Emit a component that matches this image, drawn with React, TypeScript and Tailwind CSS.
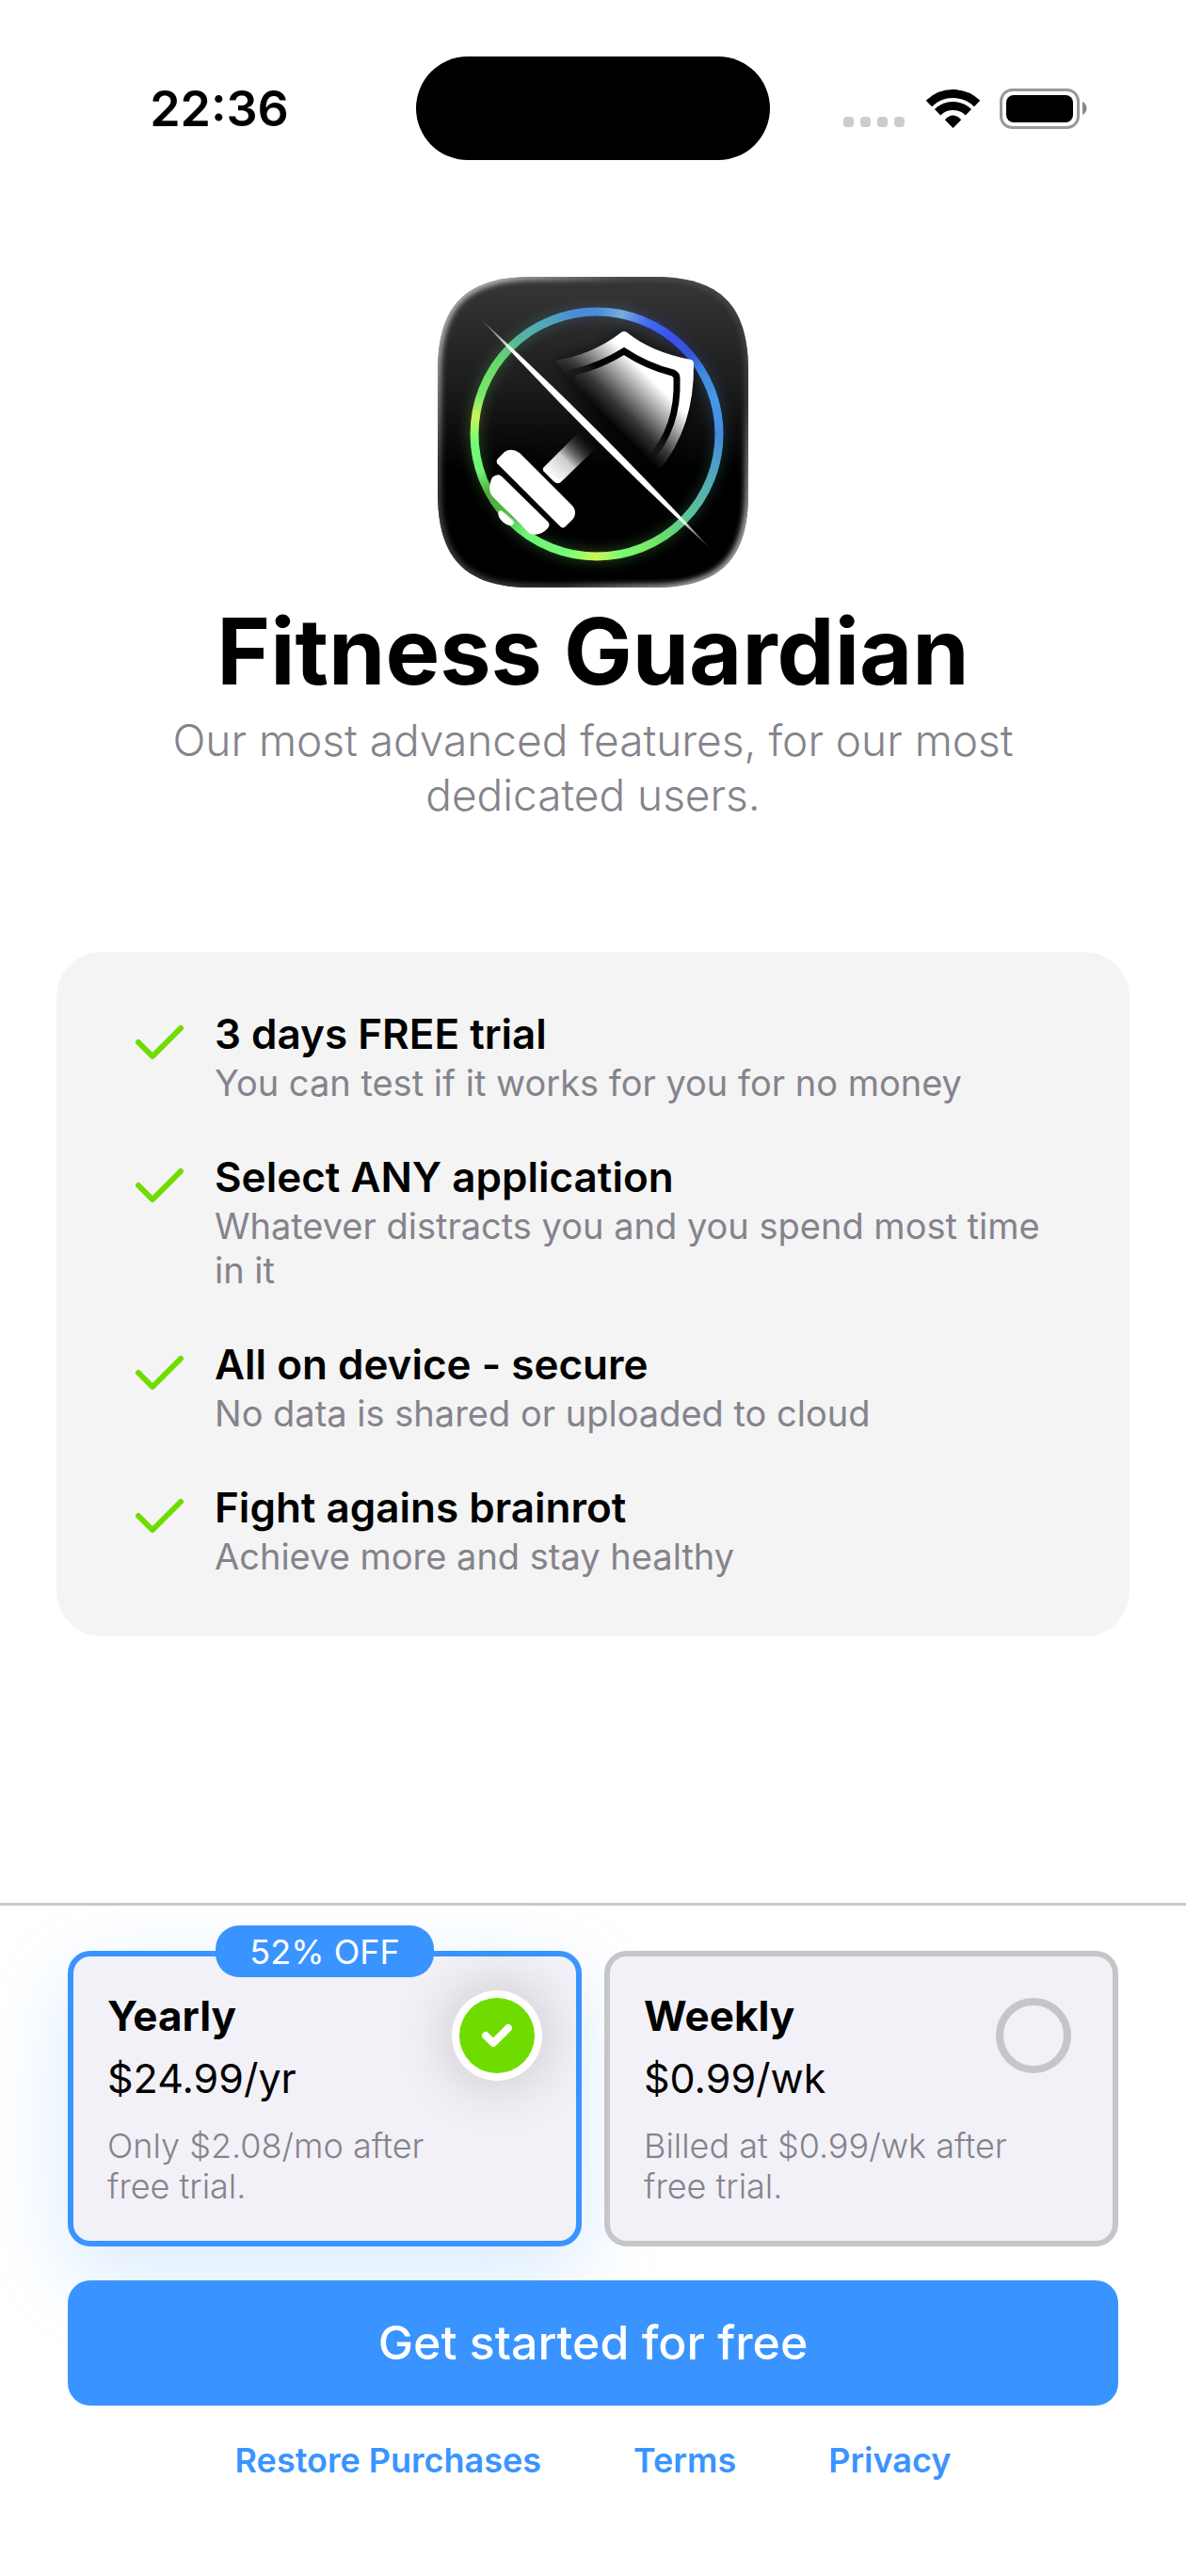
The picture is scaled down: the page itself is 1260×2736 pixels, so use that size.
const features = [
  ["3 days FREE trial", "You can test if it works for you for no money"],
  ["Select ANY application", "Whatever distracts you and you spend most time in it"],
  ["All on device - secure", "No data is shared or uploaded to cloud"],
  ["Fight agains brainrot", "Achieve more and stay healthy"],
];

function StatusBar() {
  return (
    <header className="grid h-[230px] grid-cols-3 items-start pt-[60px]">
      <div className="flex h-[112px] items-center justify-center pl-[46px] text-[52px] font-semibold">22:36</div>
      <div className="h-[110px] w-[376px] justify-self-center rounded-[55px] bg-black" />
      <div className="flex h-[110px] items-center justify-center gap-[21px] pr-[50px]">
        <svg width="68" height="42" viewBox="0 0 68 42" aria-label="No signal">
          {[0, 18, 36, 54].map((x) => (
            <rect key={x} x={x + 1} y="30" width="11" height="11" rx="4" fill="#cccccc" />
          ))}
        </svg>
        <svg width="57" height="42" viewBox="0 0 57 42" aria-label="Wi-Fi">
          <g fill="none" stroke="#000" strokeWidth="9">
            <path d="M2.900 16A36.500 36.500 0 0 1 54.100 16" />
            <path d="M12.100 25.200A23.300 23.300 0 0 1 44.900 25.200" />
          </g>
          <path d="M19.800 33.200Q28.500 24 37.200 33.200L28.500 42Z" />
        </svg>
        <svg width="94" height="43" viewBox="0 0 94 43" aria-label="Battery full">
          <rect x="1.500" y="1.500" width="82" height="40" rx="12" fill="none" stroke="#999" strokeWidth="3" />
          <rect x="7" y="7" width="71" height="29" rx="8" />
          <path d="M88 14C94 17 94 25 88 28Z" fill="#888" />
        </svg>
      </div>
    </header>
  );
}

function AppIcon() {
  return (
    <svg className="h-[330px] w-[330px]" viewBox="0 0 330 330" role="img" aria-label="Fitness Guardian app icon">
      <defs>
        <linearGradient id="bg" x1="0" y1="0" x2="0" y2="1">
          <stop offset="0.05" stopColor="#333" />
          <stop offset="0.35" stopColor="#1c1c1c" />
          <stop offset="0.63" stopColor="#000" />
        </linearGradient>
        <linearGradient id="rim" x1="0" y1="0" x2="1" y2="1">
          <stop offset="0.1" stopColor="#ddd" />
          <stop offset="0.3" stopColor="#555" />
          <stop offset="0.7" stopColor="#444" />
          <stop offset="0.9" stopColor="#ddd" />
        </linearGradient>
        <linearGradient id="shield" gradientUnits="userSpaceOnUse" x1="165" y1="136" x2="210" y2="91">
          <stop offset="0" stopColor="#fff" stopOpacity="0" />
          <stop offset="0.3" stopColor="#fff" stopOpacity="0.2" />
          <stop offset="1" stopColor="#fff" />
        </linearGradient>
        <linearGradient id="line" gradientUnits="userSpaceOnUse" x1="165" y1="136" x2="210" y2="91">
          <stop offset="0" stopColor="#000" stopOpacity="0" />
          <stop offset="0.5" stopColor="#000" />
        </linearGradient>
        <linearGradient id="handle" gradientUnits="userSpaceOnUse" x1="118" y1="210" x2="160" y2="168">
          <stop offset="0" stopColor="#fff" />
          <stop offset="0.4" stopColor="#ccc" />
          <stop offset="1" stopColor="#000" stopOpacity="0" />
        </linearGradient>
        <linearGradient id="slash" gradientUnits="userSpaceOnUse" x1="45" y1="44" x2="290" y2="289">
          <stop offset="0" stopColor="#fff" stopOpacity="0.1" />
          <stop offset="0.15" stopColor="#fff" />
          <stop offset="0.86" stopColor="#fff" />
          <stop offset="1" stopColor="#fff" stopOpacity="0.1" />
        </linearGradient>
        <filter id="soft" x="-20%" y="-20%" width="140%" height="140%">
          <feGaussianBlur stdDeviation="3" />
        </filter>
        <filter id="glow" x="-20%" y="-20%" width="140%" height="140%">
          <feGaussianBlur stdDeviation="7" />
        </filter>
        <clipPath id="tile">
          <path d="M100 0H230C300 0 330 30 330 100V230C330 300 300 330 230 330H100C30 330 0 300 0 230V100C0 30 30 0 100 0Z" />
        </clipPath>
        <clipPath id="inside">
          <circle cx="169" cy="167" r="126" />
        </clipPath>
        <mask id="ring">
          <circle cx="169" cy="167" r="130" fill="none" stroke="#fff" strokeWidth="9" />
        </mask>
        <mask id="halo">
          <circle cx="169" cy="167" r="130" fill="none" stroke="#fff" strokeOpacity="0.25" strokeWidth="12" filter="url(#glow)" />
        </mask>
      </defs>
      <g clipPath="url(#tile)">
        <rect width="330" height="330" fill="url(#bg)" />
        <path d="M100 0H230C300 0 330 30 330 100V230C330 300 300 330 230 330H100C30 330 0 300 0 230V100C0 30 30 0 100 0Z" fill="none" stroke="url(#rim)" strokeWidth="6" filter="url(#soft)" />
        <foreignObject width="330" height="330" mask="url(#halo)">
          <div className="h-[330px] w-[330px] bg-[conic-gradient(from_0deg_at_169px_167px,#4b8bd8_0deg,#78addb_12deg,#3f6ef2_24deg,#3b50ee_38deg,#3156d8_50deg,#3f8ade_60deg,#4798ea_75deg,#438bdc_90deg,#52a6bb_110deg,#5bc29a_130deg,#6add6d_148deg,#7bef65_158deg,#75fb78_168deg,#c8f558_180deg,#75fb78_194deg,#6cf576_215deg,#4db443_232deg,#4fae3b_242deg,#70f474_252deg,#75fb78_266deg,#c8f558_278deg,#75e96c_289deg,#67da6a_305deg,#55b39f_322deg,#50a5bf_337deg,#4b8bd8_350deg,#4b8bd8_360deg)]" />
        </foreignObject>
        <foreignObject width="330" height="330" mask="url(#ring)">
          <div className="h-[330px] w-[330px] bg-[conic-gradient(from_0deg_at_169px_167px,#4b8bd8_0deg,#78addb_12deg,#3f6ef2_24deg,#3b50ee_38deg,#3156d8_50deg,#3f8ade_60deg,#4798ea_75deg,#438bdc_90deg,#52a6bb_110deg,#5bc29a_130deg,#6add6d_148deg,#7bef65_158deg,#75fb78_168deg,#c8f558_180deg,#75fb78_194deg,#6cf576_215deg,#4db443_232deg,#4fae3b_242deg,#70f474_252deg,#75fb78_266deg,#c8f558_278deg,#75e96c_289deg,#67da6a_305deg,#55b39f_322deg,#50a5bf_337deg,#4b8bd8_350deg,#4b8bd8_360deg)]" />
        </foreignObject>
        <g clipPath="url(#inside)">
          <path d="M126 89Q167 84 198 58Q228 83 272 89Q276 155 235 211L180 170Z" fill="#000" opacity="0.65" filter="url(#glow)" />
          <path d="M52 217L80 181L148 249L110 280Z" fill="#000" opacity="0.6" filter="url(#glow)" />
        </g>
        <path d="M124 89Q164 83 195 59Q198 57 201 59Q227 80 269 88Q272 89 272 92Q273 160 235 206Q232 209 229 207L190 170Z" fill="url(#shield)" />
        <path d="M142 128V106Q142 102 146 101Q174 94 198 79Q222 95 250 102Q254 104 254 108Q256 161 224 195" fill="none" stroke="url(#line)" strokeWidth="7" />
        <path d="M112 203L151 164L169 181L131 218Q127 221 123 217L112 206Z" fill="url(#handle)" />
        <path d="M64 193L71 186Q78 181 87 187L142 242Q149 249 144 257L136 265Q133 268 130 265L63 198Q62 195 64 193Z" fill="#fff" />
        <path d="M58 213Q64 208 68 212L117 260Q120 263 117 267Q109 276 98 273L58 233Q52 225 58 213Z" fill="#fff" />
        <path d="M65 249Q67 247 70 250L80 259Q82 262 79 264Q73 265 67 258Q63 253 65 249Z" fill="#fff" />
        <path d="M45 44Q173 161 290 289Q162 172 45 44Z" fill="url(#slash)" />
      </g>
    </svg>
  );
}

type PlanProps = { name: string; price: string; note: string; yearly?: boolean };

function Plan({ name, price, note, yearly }: PlanProps) {
  return (
    <label className="relative block flex-1 cursor-pointer">
      <input type="radio" name="plan" defaultChecked={yearly} className="peer sr-only" />
      <div className="rounded-[24px] border-[6px] border-[#c6c6c8] bg-[#f2f1f7] pt-[36px] pr-[110px] pb-[36px] pl-[36px] peer-checked:border-[#3a94ff] peer-checked:shadow-[0_30px_90px_rgba(58,148,255,0.2)]">
        <div className="text-[44px] leading-[54px] font-bold">{name}</div>
        <div className="mt-[12px] text-[43px] leading-[54px]">{price}</div>
        <div className="mt-[24px] text-[36px] leading-[43px] font-light text-[#85838c]">{note}</div>
      </div>
      <span className="absolute top-[50px] right-[50px]">
        {yearly ? (
          <span className="flex h-[80px] w-[80px] items-center justify-center rounded-full bg-[#6fdc00] shadow-[0_0_0_8px_white,0_0_60px_12px_rgba(0,0,0,0.18)]">
            <svg width="34" height="26" viewBox="0 0 34 26" fill="none" stroke="#fff" strokeWidth="8" strokeLinecap="round" strokeLinejoin="round">
              <path d="M5 13L13 21L29 5" />
            </svg>
          </span>
        ) : (
          <span className="block h-[80px] w-[80px] rounded-full border-[8px] border-[#c6c6c8]" />
        )}
      </span>
      {yearly && (
        <span className="absolute -top-[27px] left-1/2 flex h-[55px] w-[232px] -translate-x-1/2 items-center justify-center rounded-[25px] bg-[#3a94ff] text-[36px] text-white">
          52% OFF
        </span>
      )}
    </label>
  );
}

export default function App() {
  return (
    <div className="flex min-h-screen flex-col overflow-hidden bg-white font-[Inter,sans-serif] text-black">
      <StatusBar />
      <main className="flex flex-1 flex-col px-[60px] pt-[64px]">
        <section className="flex flex-col items-center text-center">
          <AppIcon />
          <h1 className="mt-[7px] text-[97px] leading-[122px] font-bold">Fitness Guardian</h1>
          <p className="mt-[4px] max-w-[940px] text-[46px] leading-[58px] font-light text-[#85838c]">
            Our most advanced features, for our most dedicated users.
          </p>
        </section>
        <ul className="mt-[138px] flex flex-col gap-[47px] rounded-[48px] bg-[#f4f4f4] px-[80px] pt-[58px] pb-[61px]">
          {features.map(([title, text]) => (
            <li key={title} className="flex items-start gap-[28px]">
              <svg className="mt-[16px] shrink-0" width="60" height="42" viewBox="0 0 60 42" fill="none" stroke="#6fdc00" strokeWidth="6" strokeLinecap="round" strokeLinejoin="round">
                <path d="M7 22L22 37L52 7" />
              </svg>
              <div>
                <h2 className="text-[44px] leading-[58px] font-semibold">{title}</h2>
                <p className="text-[38px] leading-[47px] text-[#85838c]">{text}</p>
              </div>
            </li>
          ))}
        </ul>
      </main>
      <footer className="border-t-[3px] border-[#c7c8c9] px-[72px] pt-[48px] pb-[101px]">
        <div className="flex gap-[24px]">
          <Plan name="Yearly" price="$24.99/yr" note="Only $2.08/mo after free trial." yearly />
          <Plan name="Weekly" price="$0.99/wk" note="Billed at $0.99/wk after free trial." />
        </div>
        <button className="relative mt-[36px] h-[133px] w-full rounded-[24px] bg-[#3a94ff] text-[50px] font-medium text-white">
          Get started for free
        </button>
        <nav className="mt-[36px] flex justify-center gap-[98px] text-[36px] leading-[44px] font-semibold text-[#3a94ff]">
          <a href="#restore">Restore Purchases</a>
          <a href="#terms">Terms</a>
          <a href="#privacy">Privacy</a>
        </nav>
      </footer>
    </div>
  );
}
